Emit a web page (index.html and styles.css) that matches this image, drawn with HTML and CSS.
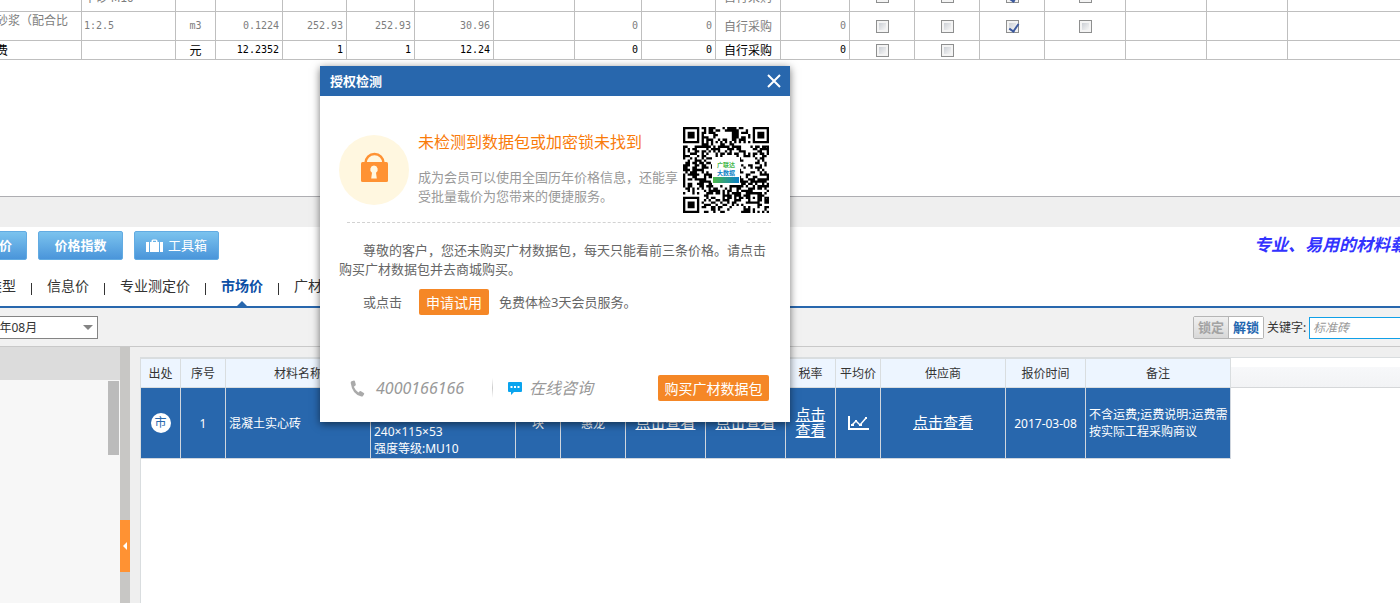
FILE: index.html
```html
<!DOCTYPE html>
<html lang="zh-CN">
<head>
<meta charset="utf-8">
<title>授权检测</title>
<link rel="stylesheet" href="styles.css">
</head>
<body>
<section class="cost-pane">
  <table class="cost">
    <colgroup><col class="w90"><col class="w94"><col class="w40"><col class="w67"><col class="w64"><col class="w68"><col class="w79"><col class="w81"><col class="w67"><col class="w74"><col class="w65"><col class="w69"><col class="w65"><col class="w65"><col class="w65"><col class="w81"><col class="w81"><col class="w81"><col></colgroup>
    <tbody>
    <tr class="tall"><td></td><td class="cjk">中砂 M10</td><td class="mid">m3</td><td class="num">0.1406</td><td class="num">394.76</td><td class="num">394.76</td><td class="num">200.00</td><td></td><td class="num">0</td><td class="num">0</td><td class="cjk mid">自行采购</td><td class="num">0</td><td class="mid"><input type="checkbox" aria-label="选项一"></td><td class="mid"><input type="checkbox" aria-label="选项二"></td><td class="mid"><input type="checkbox" aria-label="选项三" checked></td><td class="mid"><input type="checkbox" aria-label="选项四"></td><td></td><td></td><td></td></tr>
    <tr class="tall"><td class="cjk top">砂浆（配合比</td><td>1:2.5</td><td class="mid">m3</td><td class="num">0.1224</td><td class="num">252.93</td><td class="num">252.93</td><td class="num">30.96</td><td></td><td class="num">0</td><td class="num">0</td><td class="cjk mid">自行采购</td><td class="num">0</td><td class="mid"><input type="checkbox" aria-label="选项一"></td><td class="mid"><input type="checkbox" aria-label="选项二"></td><td class="mid"><input type="checkbox" aria-label="选项三" checked></td><td class="mid"><input type="checkbox" aria-label="选项四"></td><td></td><td></td><td></td></tr>
    <tr class="short"><td class="cjk">费</td><td></td><td class="cjk mid">元</td><td class="num">12.2352</td><td class="num">1</td><td class="num">1</td><td class="num">12.24</td><td></td><td class="num">0</td><td class="num">0</td><td class="cjk mid">自行采购</td><td class="num">0</td><td class="mid"><input type="checkbox" aria-label="选项一"></td><td class="mid"><input type="checkbox" aria-label="选项二"></td><td></td><td></td><td></td><td></td><td></td></tr>
    </tbody>
  </table>
</section>
<div class="band"></div>

<header class="head">
  <div class="head-top">
    <div class="tools">
      <button class="tool tool-cut" type="button">价</button>
      <button class="tool" type="button">价格指数</button>
      <button class="tool tool-box" type="button">
        <svg width="17" height="14" viewBox="0 0 17 14" aria-hidden="true"><path fill="#fff" d="M0 3h3v10H0zM4 3h1.500V2q0-1.500 1.500-1.500h3q1.500 0 1.500 1.500v1H13v10H4zM7 3h3V1.700H7zM14 3h3v10h-3z"/></svg>
        <span>工具箱</span>
      </button>
    </div>
    <p class="slogan">专业、易用的材料载价</p>
  </div>
  <nav class="tabs">
    <a href="#">类型</a>
    <a href="#">信息价</a>
    <a href="#">专业测定价</a>
    <a href="#" class="on">市场价</a>
    <a href="#">广材</a>
  </nav>
</header>

<form class="filter">
  <div class="month"><select aria-label="月份"><option>2017年08月</option></select></div>
  <div class="search">
    <div class="lock"><button type="button" class="off" disabled>锁定</button><button type="button">解锁</button></div>
    <label for="kw">关键字:</label>
    <input id="kw" type="text" placeholder="标准砖">
  </div>
</form>

<main class="work">
  <aside class="side">
    <div class="side-head"></div>
    <div class="side-body"><div class="thumb"></div></div>
  </aside>
  <div class="split">
    <button type="button" class="fold" aria-label="收起"></button>
  </div>
  <section class="result">
    <table class="prices">
      <colgroup><col class="w40"><col class="w45"><col class="w145"><col class="w145"><col class="w45"><col class="w65"><col class="w80"><col class="w80"><col class="w50"><col class="w45"><col class="w125"><col class="w80"><col class="w145"></colgroup>
      <thead><tr><th>出处</th><th>序号</th><th>材料名称</th><th></th><th></th><th></th><th></th><th></th><th>税率</th><th>平均价</th><th>供应商</th><th>报价时间</th><th>备注</th></tr></thead>
      <tbody><tr>
        <td><span class="badge">市</span></td>
        <td>1</td>
        <td class="left">混凝土实心砖</td>
        <td class="left low">240×115×53<br>强度等级:MU10</td>
        <td>块</td>
        <td>惠龙</td>
        <td><a href="#">点击查看</a></td>
        <td><a href="#">点击查看</a></td>
        <td class="two"><a href="#">点击<br>查看</a></td>
        <td><svg class="chart" width="21" height="16" viewBox="0 0 21 16" aria-label="走势" fill="none" stroke="#fff"><path stroke-width="2" d="M1 1v13h20"/><path stroke-width="1.500" d="M4 10l4-4 4 4 6-7"/><path fill="#fff" stroke="none" d="M3 9h3v2H3zM7 5h2v2H7zM11 9h3v2h-3zM17 2h2v2h-2z"/></svg></td>
        <td><a href="#">点击查看</a></td>
        <td>2017-03-08</td>
        <td class="left">不含运费;运费说明:运费需按实际工程采购商议</td>
      </tr></tbody>
    </table>
    <div class="rest"></div>
  </section>
</main>

<div class="dialog" role="dialog" aria-labelledby="dlg">
  <div class="dialog-head">
    <h2 id="dlg">授权检测</h2>
    <button type="button" class="close" aria-label="关闭"><svg width="14" height="14" viewBox="0 0 14 14"><path d="M1 1l12 12M13 1L1 13" stroke="#fff" stroke-width="2"/></svg></button>
  </div>
  <div class="dialog-body">
    <div class="notice">
      <svg class="lock-icon" width="70" height="70" viewBox="0 0 70 70" aria-hidden="true"><circle cx="35" cy="35" r="35" fill="#fff7e0"/><path d="M26.500 29v-1a9 9 0 0 1 18 0v1" fill="none" stroke="#ff9233" stroke-width="2.500"/><rect x="22" y="27" width="27" height="20" rx="1.500" fill="#ff9233"/><path fill="#fff7e0" d="M35 30.500a4 4 0 0 1 2 7.300l.8 5.700h-5.600l.8-5.700a4 4 0 0 1 2-7.300z"/></svg>
      <div class="notice-text">
        <h3>未检测到数据包或加密锁未找到</h3>
        <p>成为会员可以使用全国历年价格信息，还能享受批量载价为您带来的便捷服务。</p>
      </div>
      <div class="qr">
        <svg id="qr" width="86" height="86" viewBox="0 0 37 37" role="img" aria-label="二维码"></svg>
        <div class="qr-logo"><b>广联达</b><b class="blue">大数据</b><i></i></div>
      </div>
    </div>
    <div class="rule"><span></span><span class="rule-end"></span></div>
    <p class="copy">尊敬的客户，您还未购买广材数据包，每天只能看前三条价格。请点击购买广材数据包并去商城购买。</p>
    <p class="trial">或点击<button type="button" class="orange">申请试用</button>免费体检3天会员服务。</p>
    <div class="contact">
      <svg width="15" height="17" viewBox="0 0 15 17" aria-hidden="true"><path fill="#aaa" d="M1.500 1.200L4 .6q.8 0 1 .8l.8 3.200q0 .8-.6 1.200l-1.400.9q1.600 3.700 4.600 5.800l1.300-1.200q.6-.5 1.300-.1l2.800 1.900q.7.500.3 1.200l-1.100 1.700q-.6.700-1.600.5Q2.300 14.500.7 3 .6 1.600 1.500 1.200z"/></svg>
      <span class="phone">4000166166</span>
      <span class="bar"></span>
      <svg width="14" height="13" viewBox="0 0 14 13" aria-hidden="true"><path fill="#0aa4ee" d="M1 0h12q1 0 1 1v8q0 1-1 1H6l-3 3v-3H1q-1 0-1-1V1q0-1 1-1z"/><path fill="#fff" d="M2.500 4h2v2h-2zM6 4h2v2H6zM9.500 4h2v2h-2z"/></svg>
      <a href="#" class="chat">在线咨询</a>
      <button type="button" class="orange buy">购买广材数据包</button>
    </div>
  </div>
</div>
<script src="qr.js"></script>
</body>
</html>
```
FILE: styles.css
```css
* { box-sizing: border-box; }
body {
  margin: 0;
  min-height: 100vh;
  display: flex;
  flex-direction: column;
  overflow: hidden;
  position: relative;
  background: #fff;
  color: #333;
  font: 12px/17px "Noto Sans", "Noto Sans CJK SC", sans-serif;
}
h2, h3, p { margin: 0; }
button, input, select { font: inherit; margin: 0; }
button { border: 0; padding: 0; cursor: pointer; }
a { color: inherit; text-decoration: none; }
table { border-collapse: collapse; table-layout: fixed; }

.w40 { width: 40px; }
.w45 { width: 45px; }
.w50 { width: 50px; }
.w64 { width: 64px; }
.w65 { width: 65px; }
.w67 { width: 67px; }
.w68 { width: 68px; }
.w69 { width: 69px; }
.w74 { width: 74px; }
.w79 { width: 79px; }
.w80 { width: 80px; }
.w81 { width: 81px; }
.w90 { width: 90px; }
.w94 { width: 94px; }
.w125 { width: 125px; }
.w145 { width: 145px; }

/* cost list */
.cost-pane {
  overflow: hidden;
  height: 197px;
  flex: none;
  border-bottom: 1px solid #aeaeb2;
}
.cost {
  margin: -18px 0 0 -8px;
  width: calc(100% + 8px);
  border-collapse: separate;
  border-spacing: 0;
}
.cost td {
  padding: 0 3px 0 2px;
  border: solid #bfbfbf;
  border-width: 0 1px 1px 0;
  white-space: nowrap;
  color: #7d7d7d;
  font: 10px/14px "DejaVu Sans Mono", monospace;
}
.cost td:first-child { padding-left: 4px; }
.cost td:last-child { border-right: 0; }
.cost .tall td { height: 29px; }
.cost tr:first-child td { height: 30px; }
.cost .short td { height: 19px; color: #000; }
.cost .cjk { font: 12px/14px "Noto Sans CJK SC", sans-serif; }
.cost .top { vertical-align: top; padding-top: 1px; }
.cost .num { text-align: right; }
.cost .mid { text-align: center; padding: 0; }
.cost input {
  appearance: none;
  display: block;
  width: 13px;
  height: 13px;
  margin: 0 auto;
  border: 1px solid #8e8f8f;
  background: linear-gradient(135deg, #cbcfd5, #f6f6f6) content-box, #f4f4f4;
  padding: 2px;
  position: relative;
}
.cost input:checked::after {
  content: "";
  position: absolute;
  left: 4px;
  top: 1px;
  width: 4px;
  height: 8px;
  border: solid #3d5a9e;
  border-width: 0 2px 2px 0;
  transform: rotate(35deg);
}
.band { height: 30px; flex: none; background: #efefef; }

/* header */
.head { border-bottom: 2px solid #2867ad; flex: none; }
.head-top {
  display: flex;
  justify-content: space-between;
  padding-top: 4px;
}
.tools { display: flex; gap: 11px; margin-left: -58px; }
.tool {
  width: 85px;
  height: 29px;
  border: 1px solid #62abe2;
  border-radius: 2px;
  background: linear-gradient(#7bc3ee, #4a95da);
  color: #fff;
  font-size: 13px;
  font-weight: bold;
}
.tool-cut { text-align: right; padding-right: 14px; }
.tool-box {
  display: flex;
  align-items: center;
  justify-content: center;
  gap: 5px;
  font-weight: normal;
}
.slogan {
  width: 146px;
  overflow: hidden;
  white-space: nowrap;
  color: #33f;
  font-size: 17px;
  line-height: 28px;
  font-style: italic;
  font-weight: bold;
}
.tabs {
  display: flex;
  margin-left: -27px;
  padding-top: 12px;
  font-size: 14px;
}
.tabs a {
  padding: 0 15px;
  height: 34px;
  line-height: 28px;
  position: relative;
}
.tabs a + a::before {
  content: "";
  position: absolute;
  left: 0;
  top: 11px;
  width: 1px;
  height: 12px;
  background: #333;
}
.tabs a + a { padding-left: 16px; }
.tabs .on { color: #0d4fa5; font-weight: bold; }
.tabs .on::after {
  content: "";
  position: absolute;
  left: 50%;
  bottom: 0;
  margin-left: -5px;
  border: 5px solid transparent;
  border-top: 0;
  border-bottom-color: #2867ad;
}

/* filter */
.filter {
  flex: none;
  display: flex;
  justify-content: space-between;
  padding: 8px 0 7px;
  background: #f1f1f1;
  border-bottom: 1px solid #c9c9c9;
}
.month { position: relative; margin-left: -40px; }
.month select {
  appearance: none;
  display: block;
  width: 138px;
  height: 23px;
  padding: 0 0 0 11px;
  border: 1px solid #848484;
  border-radius: 0;
  background: #fff;
  color: #333;
}
.month::after {
  content: "";
  position: absolute;
  right: 5px;
  top: 9px;
  border: 5px solid transparent;
  border-top-color: #848484;
  border-bottom: 0;
}
.search { display: flex; align-items: center; }
.lock {
  display: flex;
  border: 1px solid #b5b5b5;
  border-radius: 2px;
  height: 23px;
  margin-right: 3px;
}
.lock button {
  width: 34px;
  background: #fff;
  color: #2467b0;
  font-size: 13px;
  font-weight: bold;
}
.lock .off {
  width: 35px;
  color: #a3a3a3;
  background: linear-gradient(#f0f0f0, #d8d8d8);
  border-right: 1px solid #b5b5b5;
}
.search label { width: 42px; white-space: nowrap; }
.search input {
  width: 96px;
  height: 22px;
  margin-right: -5px;
  padding: 0 3px;
  border: 1px solid #10a0e8;
  background: #fff;
}
.search input::placeholder { color: #999; font-style: italic; }

/* work area */
.work { flex: 1; display: flex; background: #efefef; }
.side { width: 120px; display: flex; flex-direction: column; }
.side-head { height: 33px; background: #dcdcdc; }
.side-body {
  flex: 1;
  padding: 1px 1px 0 0;
  background: #f7f7f7;
}
.thumb {
  width: 11px;
  height: 74px;
  margin-left: auto;
  background: #bbb;
}
.split { width: 10px; padding-top: 173px; background: #c8c7c5; }
.fold {
  display: block;
  width: 10px;
  height: 52px;
  background: #ff9233;
}
.fold::before {
  content: "";
  display: block;
  width: 0;
  margin-left: 3px;
  border: 4px solid transparent;
  border-right-color: #fff;
  border-left: 0;
}
.result {
  flex: 1;
  display: flex;
  align-items: flex-start;
  margin: 10px 0 0 10px;
  border: solid #d9dddf;
  border-width: 1px 0 0 1px;
  background: #fff;
}
.prices {
  flex: none;
  width: 1090px;
  border-collapse: separate;
  border-spacing: 0;
}
.prices th {
  height: 30px;
  padding: 0;
  background: #edf5ff;
  border: solid #d9dddf;
  border-width: 1px 1px 1px 0;
  font-weight: normal;
  white-space: nowrap;
}
.prices td {
  height: 71px;
  padding: 0;
  background: #2867ad;
  border: solid #d0d6de;
  border-width: 0 1px 1px 0;
  color: #fff;
  text-align: center;
}
.prices .left { text-align: left; padding: 0 2px 0 3px; }
.prices .low { vertical-align: bottom; padding-bottom: 1px; }
.prices td a { font-size: 15px; text-decoration: underline; }
.prices .two { line-height: 14px; }
.badge {
  display: block;
  width: 20px;
  height: 20px;
  margin: 0 auto;
  border-radius: 50%;
  background: #fff;
  color: #2867ad;
  line-height: 20px;
}
.chart { display: block; margin: 0 auto; }
.rest {
  flex: 1;
  height: 30px;
  border-top: 9px solid #fff;
  border-bottom: 1px solid #d5d7d9;
  background: linear-gradient(#f7f8fa, #f2f3f5);
}

/* dialog */
.dialog {
  position: absolute;
  left: 320px;
  top: 66px;
  width: 470px;
  background: #fff;
  box-shadow: 0 2px 8px rgba(0, 0, 0, .55);
  color: #666;
  font-size: 13px;
  line-height: 19px;
}
.dialog-head {
  display: flex;
  align-items: center;
  justify-content: space-between;
  height: 30px;
  padding: 0 9px 0 10px;
  background: #2867ad;
  color: #fff;
}
.dialog-head h2 { font-size: 13px; }
.close { display: flex; background: none; }
.dialog-body { padding: 31px 19px 21px; }
.notice { display: flex; }
.lock-icon { flex: none; margin-top: 8px; }
.notice-text { width: 265px; padding-left: 9px; }
.notice-text h3 {
  color: #f97b0a;
  font-size: 16px;
  font-weight: normal;
  line-height: 30px;
  margin-bottom: 11px;
  white-space: nowrap;
}
.notice-text p { color: #999; white-space: normal; width: 262px; }
.qr {
  position: relative;
  width: 86px;
  height: 86px;
  margin-left: 9px;
}
.qr svg { display: block; }
.qr-logo {
  position: absolute;
  left: 29px;
  top: 30px;
  width: 28px;
  height: 28px;
  padding-top: 4px;
  background: #fff;
  text-align: center;
}
.qr-logo b {
  display: block;
  color: #42b649;
  font-size: 6px;
  line-height: 8px;
}
.qr-logo .blue { color: #0c83c6; }
.qr-logo i {
  display: block;
  height: 6px;
  margin: 0 1px;
  background: linear-gradient(90deg, #4cb848, #0b80c8);
}
.rule { display: flex; gap: 11px; padding: 9px 0 0 8px; }
.rule span { width: 389px; border-top: 1px dashed #d2d2d2; }
.rule .rule-end { width: 24px; }
.copy { margin: 18px 0 10px; text-indent: 24px; }
.trial { display: flex; align-items: center; padding-left: 24px; }
.orange {
  width: 70px;
  height: 26px;
  margin: 0 10px 0 17px;
  border-radius: 2px;
  background: #f58726;
  color: #fff;
  font-size: 14px;
}
.contact {
  display: flex;
  align-items: center;
  padding: 60px 0 0 11px;
  color: #999;
  font-size: 16px;
  font-style: italic;
}
.phone { margin-left: 11px; width: 116px; }
.bar {
  width: 1px;
  height: 20px;
  margin-right: 15px;
  background: linear-gradient(#fff, #ccc, #fff);
}
.chat { margin-left: 7px; }
.contact .buy {
  width: 111px;
  margin: 0 2px 0 auto;
  font-style: normal;
}
```
FILE: qr.js
```js
const N = 37;
let seed = 20177;
const next = () => (seed = (seed * 1103515245 + 12345) % 2147483648) / 2147483648;
const ring = (x, y, cx, cy) => Math.max(Math.abs(x - cx), Math.abs(y - cy));

let d = "";
for (let y = 0; y < N; y++) {
  for (let x = 0; x < N; x++) {
    let on = next() < 0.5;
    if (x === 6 || y === 6) on = (x + y) % 2 === 0;
    const align = ring(x, y, 30, 30);
    if (align <= 2) on = align !== 1;
    for (const [cx, cy] of [[3, 3], [33, 3], [3, 33]]) {
      const r = ring(x, y, cx, cy);
      if (r <= 4) on = r < 2 || r === 3;
    }
    if (on) d += `M${x} ${y}h1v1h-1z`;
  }
}
const path = document.createElementNS("http://www.w3.org/2000/svg", "path");
path.setAttribute("d", d);
document.getElementById("qr").append(path);
```
